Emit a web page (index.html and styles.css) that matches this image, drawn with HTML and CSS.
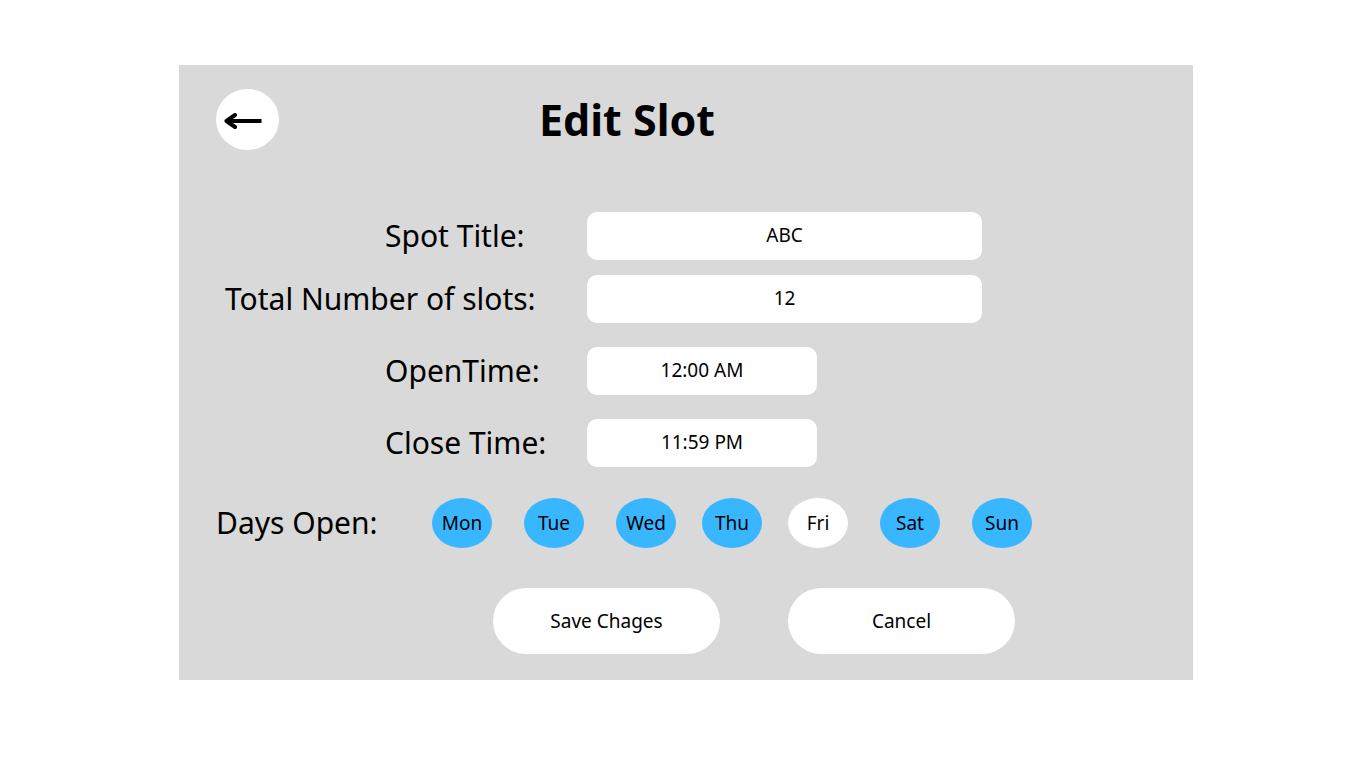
FILE: index.html
```html
<!DOCTYPE html>
<html lang="en">
<head>
<meta charset="utf-8">
<meta name="viewport" content="width=device-width, initial-scale=1">
<title>Edit Slot</title>
<link rel="stylesheet" href="styles.css">
</head>
<body>
<main class="panel">
  <header class="header">
    <button class="back" type="button" aria-label="Back">
      <svg class="back-icon" viewBox="0 0 38 18" aria-hidden="true">
        <path d="M37.500 9H3" fill="none" stroke="#000" stroke-width="4"/>
        <path d="M11 3L2.500 9l8.500 6" fill="none" stroke="#000" stroke-width="4" stroke-linecap="round" stroke-linejoin="round"/>
      </svg>
    </button>
    <h1 class="title">Edit Slot</h1>
  </header>
  <form class="form">
    <div class="row">
      <label class="label" for="spot">Spot Title:</label>
      <input class="field" id="spot" type="text" value="ABC">
    </div>
    <div class="row">
      <label class="label label-wide" for="total">Total Number of slots:</label>
      <input class="field" id="total" type="text" inputmode="numeric" value="12">
    </div>
    <div class="row row-time">
      <label class="label" for="open">OpenTime:</label>
      <input class="field field-time" id="open" type="text" value="12:00 AM">
    </div>
    <div class="row row-time">
      <label class="label" for="close">Close Time:</label>
      <input class="field field-time" id="close" type="text" value="11:59 PM">
    </div>
    <div class="days-row" role="group" aria-labelledby="days-label">
      <span class="days-label" id="days-label">Days Open:</span>
      <div class="days">
        <button class="day" type="button" aria-pressed="true">Mon</button>
        <button class="day" type="button" aria-pressed="true">Tue</button>
        <button class="day" type="button" aria-pressed="true">Wed</button>
        <button class="day" type="button" aria-pressed="true">Thu</button>
        <button class="day" type="button" aria-pressed="false">Fri</button>
        <button class="day" type="button" aria-pressed="true">Sat</button>
        <button class="day" type="button" aria-pressed="true">Sun</button>
      </div>
    </div>
    <div class="actions">
      <button class="action" type="submit">Save Chages</button>
      <button class="action" type="button">Cancel</button>
    </div>
  </form>
</main>
</body>
</html>
```

FILE: styles.css
```css
* {
  box-sizing: border-box;
}

body {
  margin: 0;
  padding: 65px 173px 64px 179px;
  background: #fff;
  color: #000;
  font-family: "Noto Sans", "Open Sans", sans-serif;
}

button,
input {
  margin: 0;
  padding: 0;
  border: 0;
  background: #fff;
  color: inherit;
  font-family: inherit;
  font-size: 19px;
}

button {
  cursor: pointer;
}

.panel {
  padding: 24px 0 26px;
  background: #d9d9d9;
}

.header {
  display: flex;
  align-items: center;
  padding-left: 37px;
}

.back {
  display: flex;
  align-items: center;
  width: 63px;
  height: 61px;
  padding: 3px 0 0 8px;
  border-radius: 50%;
}

.back-icon {
  width: 38px;
  height: 18px;
}

.title {
  margin: 0 0 0 260px;
  font-size: 43px;
  line-height: 60px;
  font-weight: 700;
}

.form {
  padding-top: 62px;
}

.row {
  display: grid;
  grid-template-columns: 408px minmax(0, 395px);
  align-items: center;
  margin-bottom: 15px;
}

.row-time {
  margin: 24px 0;
}

.label {
  padding-left: 206px;
  font-size: 30px;
  line-height: 48px;
  white-space: nowrap;
}

.label-wide {
  padding-left: 46px;
}

.field {
  width: 100%;
  height: 48px;
  padding-bottom: 2px;
  border-radius: 10px;
  text-align: center;
}

.field-time {
  width: 230px;
}

.days-row {
  display: flex;
  align-items: center;
  margin-top: 31px;
  padding-left: 37px;
}

.days-label {
  width: 216px;
  font-size: 30px;
  line-height: 50px;
}

.days {
  display: grid;
  grid-template-columns: 92px 92px 86px 86px 92px 92px 60px;
}

.day {
  width: 60px;
  height: 50px;
  border-radius: 50%;
}

.day[aria-pressed="true"] {
  background: #38b6ff;
}

.actions {
  display: flex;
  gap: 68px;
  margin-top: 40px;
  padding-left: 314px;
}

.action {
  width: 227px;
  height: 66px;
  border-radius: 33px;
}
```
